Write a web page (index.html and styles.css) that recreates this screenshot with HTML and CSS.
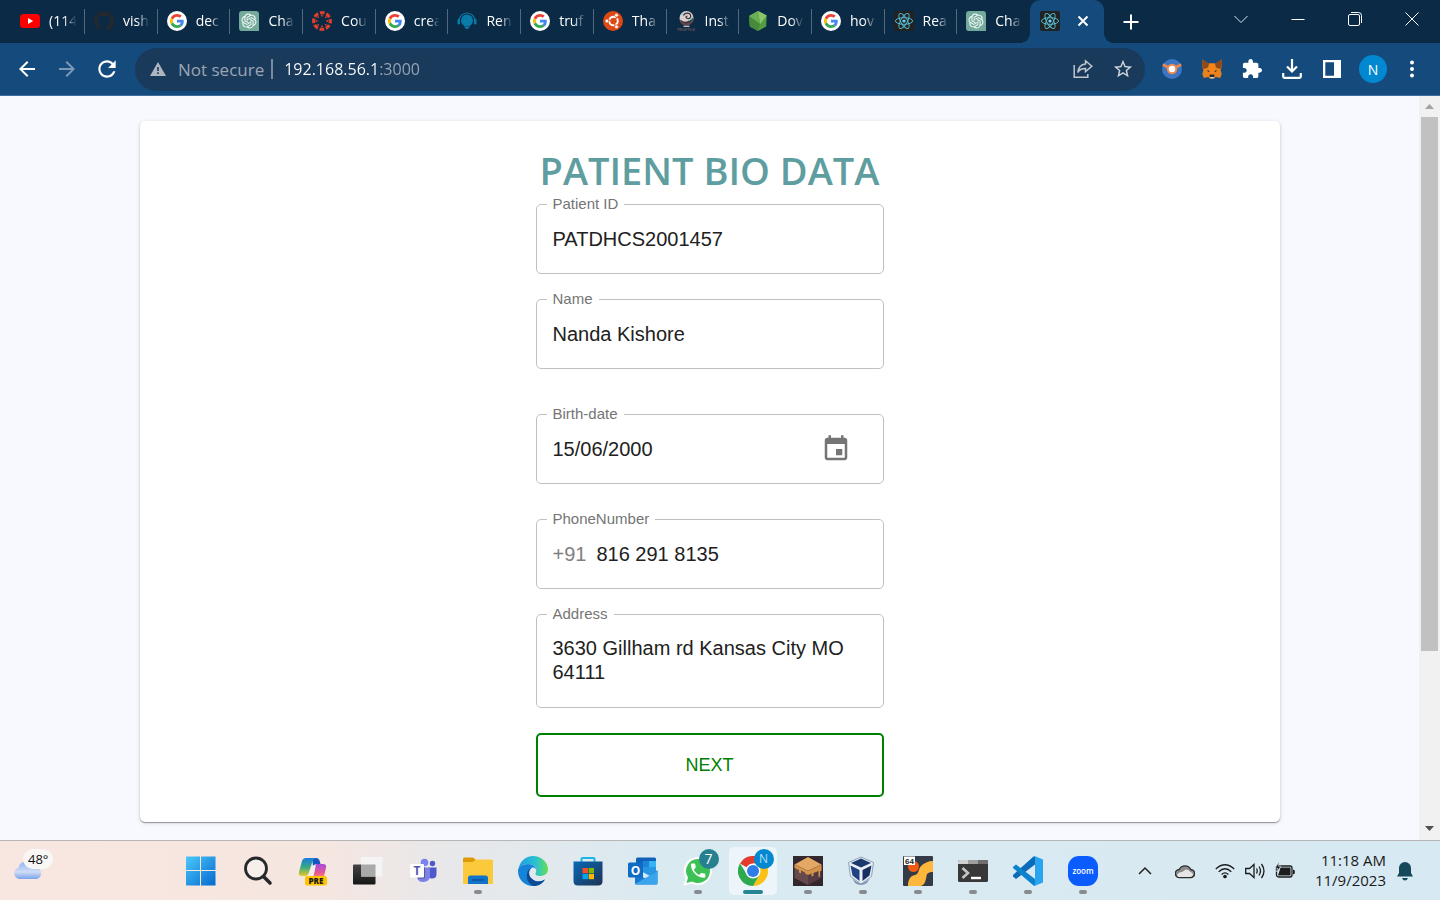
FILE: index.html
```html
<!DOCTYPE html>
<html lang="en">
<head>
<meta charset="utf-8">
<title>Patient Bio Data</title>
<link rel="stylesheet" href="styles.css">
</head>
<body>
<svg class="defs" aria-hidden="true">
  <symbol id="google" viewBox="0 0 80 80">
    <circle cx="40" cy="40" r="40" fill="#fff"/>
    <g transform="translate(12 12) scale(1.17)">
      <path fill="#ea4335" d="M24 9.5c3.54 0 6.71 1.22 9.21 3.6l6.85-6.85C35.9 2.38 30.47 0 24 0 14.62 0 6.51 5.38 2.56 13.22l7.98 6.19C12.43 13.72 17.74 9.5 24 9.5z"/>
      <path fill="#4285f4" d="M46.98 24.55c0-1.57-.15-3.09-.38-4.55H24v9.02h12.94c-.58 2.96-2.26 5.48-4.78 7.18l7.73 6c4.51-4.18 7.09-10.36 7.09-17.65z"/>
      <path fill="#fbbc05" d="M10.53 28.59c-.48-1.45-.76-2.99-.76-4.59s.27-3.14.76-4.59l-7.98-6.19C.92 16.46 0 20.12 0 24c0 3.88.92 7.54 2.56 10.78l7.97-6.19z"/>
      <path fill="#34a853" d="M24 48c6.48 0 11.93-2.13 15.89-5.81l-7.73-6c-2.15 1.45-4.92 2.3-8.16 2.3-6.26 0-11.57-4.22-13.47-9.91l-7.98 6.19C6.51 42.62 14.62 48 24 48z"/>
    </g>
  </symbol>
  <symbol id="chatgpt" viewBox="0 0 32 32">
    <path fill="#74aa9c" d="M5 0h22a5 5 0 0 1 5 5v27H5a5 5 0 0 1-5-5V5a5 5 0 0 1 5-5z"/>
    <path transform="translate(4 4)" fill="#fff" d="M22.2819 9.8211a5.9847 5.9847 0 0 0-.5157-4.9108 6.0462 6.0462 0 0 0-6.5098-2.9A6.0651 6.0651 0 0 0 4.9807 4.1818a5.9847 5.9847 0 0 0-3.9977 2.9 6.0462 6.0462 0 0 0 .7427 7.0966 5.98 5.98 0 0 0 .511 4.9107 6.051 6.051 0 0 0 6.5146 2.9001A5.9847 5.9847 0 0 0 13.2599 24a6.0557 6.0557 0 0 0 5.7718-4.2058 5.9894 5.9894 0 0 0 3.9977-2.9001 6.0557 6.0557 0 0 0-.7475-7.0729zm-9.022 12.6081a4.4755 4.4755 0 0 1-2.8764-1.0408l.1419-.0804 4.7783-2.7582a.7948.7948 0 0 0 .3927-.6813v-6.7369l2.02 1.1686a.071.071 0 0 1 .038.052v5.5826a4.504 4.504 0 0 1-4.4945 4.4944zm-9.6607-4.1254a4.4708 4.4708 0 0 1-.5346-3.0137l.142.0852 4.783 2.7582a.7712.7712 0 0 0 .7806 0l5.8428-3.3685v2.3324a.0804.0804 0 0 1-.0332.0615L9.74 19.9502a4.4992 4.4992 0 0 1-6.1408-1.6464zM2.3408 7.8956a4.485 4.485 0 0 1 2.3655-1.9728V11.6a.7664.7664 0 0 0 .3879.6765l5.8144 3.3543-2.0201 1.1685a.0757.0757 0 0 1-.071 0l-4.8303-2.7865A4.504 4.504 0 0 1 2.3408 7.872zm16.5963 3.8558L13.1038 8.364 15.1192 7.2a.0757.0757 0 0 1 .071 0l4.8303 2.7913a4.4944 4.4944 0 0 1-.6765 8.1042v-5.6772a.79.79 0 0 0-.407-.667zm2.0107-3.0231l-.142-.0852-4.7735-2.7818a.7759.7759 0 0 0-.7854 0L9.409 9.2297V6.8974a.0662.0662 0 0 1 .0284-.0615l4.8303-2.7866a4.4992 4.4992 0 0 1 6.6802 4.66zM8.3065 12.863l-2.02-1.1638a.0804.0804 0 0 1-.038-.0567V6.0742a4.4992 4.4992 0 0 1 7.3757-3.4537l-.142.0805L8.704 5.459a.7948.7948 0 0 0-.3927.6813zm1.0976-2.3654l2.602-1.4998 2.6069 1.4998v2.9994l-2.5974 1.4997-2.6067-1.4997Z"/>
  </symbol>
  <symbol id="react" viewBox="0 0 20 20">
    <rect width="20" height="20" rx="2" fill="#222"/>
    <circle cx="10" cy="10" r="1.6" fill="#61dafb"/>
    <g fill="none" stroke="#58c4dc" stroke-width=".9">
      <ellipse cx="10" cy="10" rx="8.6" ry="3.3"/>
      <ellipse cx="10" cy="10" rx="8.6" ry="3.3" transform="rotate(60 10 10)"/>
      <ellipse cx="10" cy="10" rx="8.6" ry="3.3" transform="rotate(120 10 10)"/>
    </g>
  </symbol>
</svg>

<header class="browser">
  <div class="tabstrip">
    <div class="tabs" role="tablist">
      <button class="tab" role="tab"><svg class="fav" viewBox="0 0 20 20"><rect y="3" width="20" height="14" rx="3.5" fill="#f00"/><path d="M8 7l5.200 3L8 13z" fill="#fff"/></svg><span class="tab-title">(114</span></button>
      <button class="tab" role="tab"><svg class="fav" viewBox="0 0 24 24"><path fill="#24292f" d="M12 .297c-6.63 0-12 5.373-12 12 0 5.303 3.438 9.8 8.205 11.385.6.113.82-.258.82-.577 0-.285-.01-1.04-.015-2.04-3.338.724-4.042-1.61-4.042-1.61C4.422 18.07 3.633 17.7 3.633 17.7c-1.087-.744.084-.729.084-.729 1.205.084 1.838 1.236 1.838 1.236 1.07 1.835 2.809 1.305 3.495.998.108-.776.417-1.305.76-1.605-2.665-.3-5.466-1.332-5.466-5.93 0-1.31.465-2.38 1.235-3.22-.135-.303-.54-1.523.105-3.176 0 0 1.005-.322 3.3 1.23.96-.267 1.98-.399 3-.405 1.02.006 2.04.138 3 .405 2.28-1.552 3.285-1.23 3.285-1.23.645 1.653.24 2.873.12 3.176.765.84 1.23 1.91 1.23 3.22 0 4.61-2.805 5.625-5.475 5.92.42.36.81 1.096.81 2.22 0 1.606-.015 2.896-.015 3.286 0 .315.21.69.825.57C20.565 22.092 24 17.592 24 12.297c0-6.627-5.373-12-12-12"/></svg><span class="tab-title">vish</span></button>
      <button class="tab" role="tab"><svg class="fav"><use href="#google"/></svg><span class="tab-title">dec</span></button>
      <button class="tab" role="tab"><svg class="fav"><use href="#chatgpt"/></svg><span class="tab-title">Cha</span></button>
      <button class="tab" role="tab"><svg class="fav" viewBox="0 0 20 20"><circle cx="10" cy="10" r="8.300" fill="none" stroke="#e13f2b" stroke-width="3.200" stroke-dasharray="4.700 1.818" stroke-dashoffset="2.350"/><g fill="#e13f2b"><circle cx="10" cy="4.700" r=".9"/><circle cx="10" cy="15.300" r=".9"/><circle cx="4.700" cy="10" r=".9"/><circle cx="15.300" cy="10" r=".9"/><circle cx="6.200" cy="6.200" r=".9"/><circle cx="13.800" cy="6.200" r=".9"/><circle cx="6.200" cy="13.800" r=".9"/><circle cx="13.800" cy="13.800" r=".9"/></g></svg><span class="tab-title">Cou</span></button>
      <button class="tab" role="tab"><svg class="fav"><use href="#google"/></svg><span class="tab-title">crea</span></button>
      <button class="tab" role="tab"><svg class="fav" viewBox="0 0 20 20"><path d="M2 10a8 8 0 0 1 16 0" fill="none" stroke="#0a7ba8" stroke-width="1.200"/><circle cx="10" cy="9.500" r="6" fill="#0a7ba8"/><path d="M6.500 15.500h7L10 18.500z" fill="#0a7ba8"/><rect x=".5" y="8" width="2.500" height="5.500" rx="1.200" fill="#0a7ba8"/><rect x="17" y="8" width="2.500" height="5.500" rx="1.200" fill="#0a7ba8"/></svg><span class="tab-title">Ren</span></button>
      <button class="tab" role="tab"><svg class="fav"><use href="#google"/></svg><span class="tab-title">truf</span></button>
      <button class="tab" role="tab"><svg class="fav" viewBox="0 0 20 20"><circle cx="10" cy="10" r="10" fill="#dd4814"/><circle cx="10.500" cy="10" r="4.300" fill="none" stroke="#fff" stroke-width="1.900" stroke-dasharray="7.900 1.100" stroke-dashoffset="3.400"/><g fill="#fff" stroke="#dd4814" stroke-width=".7"><circle cx="3.900" cy="10" r="1.900"/><circle cx="13.500" cy="4.200" r="1.900"/><circle cx="13.500" cy="15.800" r="1.900"/></g></svg><span class="tab-title">Tha</span></button>
      <button class="tab" role="tab"><svg class="fav" viewBox="0 0 20 20"><circle cx="10.500" cy="7" r="7" fill="#d8d0cf"/><path d="M3.500 7.500c1.500 3 4 4 7 3.500s5-2.500 6.500-4.500c1 4-2 8-6.500 8s-7-3-7-7z" fill="#5e464d"/><path d="M7.500 4.500c1-3 6-3 7-.5s-1 4-3 3.500-2-2.500 0-2.500M5 9.500c2 2.500 7 2.500 10 0" fill="none" stroke="#3a2a2f" stroke-width="1.200"/><path d="M12 9.500c2 0 3.500-1.500 4-3M5.500 4l1.500-2" stroke="#3fe0c5" fill="none"/><rect x="7.500" y="14.700" width="6" height="1.200" fill="#d8d0cf"/><text x="10" y="19.800" text-anchor="middle" font-size="4" fill="#63525a" font-family="Liberation Sans" font-weight="700">TRUFFLE</text></svg><span class="tab-title">Inst</span></button>
      <button class="tab" role="tab"><svg class="fav" viewBox="0 0 20 20"><path d="M10 0l8.700 4.500-.5 11L10 20l-8.200-4.500L1 5z" fill="#539e43"/><path d="M10 0l8.700 4.500L12 13z" fill="#8cc56b"/><path d="M10 0l2 13L1 5z" fill="#69ad55"/><path d="M1 5l11 8-2 7-8.200-4.500z" fill="#48893c"/></svg><span class="tab-title">Dov</span></button>
      <button class="tab" role="tab"><svg class="fav"><use href="#google"/></svg><span class="tab-title">hov</span></button>
      <button class="tab" role="tab"><svg class="fav"><use href="#react"/></svg><span class="tab-title">Rea</span></button>
      <button class="tab" role="tab"><svg class="fav"><use href="#chatgpt"/></svg><span class="tab-title">Cha</span></button>
    </div>
    <div class="active-tab">
      <svg class="fav"><use href="#react"/></svg>
      <button class="icon-btn" aria-label="Close tab"><svg width="12" height="12" viewBox="0 0 12 12"><path d="M1.500 1.500l9 9M10.500 1.500l-9 9" stroke="#fff" stroke-width="2"/></svg></button>
    </div>
    <button class="icon-btn new-tab" aria-label="New tab"><svg width="16" height="16" viewBox="0 0 16 16"><path d="M8 .5v15M.5 8h15" stroke="#fff" stroke-width="2"/></svg></button>
    <div class="window-controls">
      <button class="icon-btn" aria-label="Search tabs"><svg width="14" height="14" viewBox="0 0 14 14"><path d="M.5 4L7 10.500 13.500 4" fill="none" stroke="#dfe6ee"/></svg></button>
      <button class="icon-btn" aria-label="Minimize"><svg width="14" height="14" viewBox="0 0 14 14"><path d="M.5 7.500h13" stroke="#fff"/></svg></button>
      <button class="icon-btn" aria-label="Restore"><svg width="14" height="14" viewBox="0 0 14 14" fill="none" stroke="#fff"><rect x=".5" y="2.500" width="11" height="11" rx="1.500"/><path d="M3 .5h7.500a3 3 0 0 1 3 3V11"/></svg></button>
      <button class="icon-btn" aria-label="Close"><svg width="14" height="14" viewBox="0 0 14 14"><path d="M.5.5l13 13M13.500.5l-13 13" stroke="#fff"/></svg></button>
    </div>
  </div>

  <div class="toolbar">
    <div class="nav">
      <button class="icon-btn" aria-label="Back"><svg width="24" height="24" viewBox="0 0 24 24" fill="#fff"><path d="M20 11H7.830l5.590-5.590L12 4l-8 8 8 8 1.410-1.410L7.830 13H20v-2z"/></svg></button>
      <button class="icon-btn" aria-label="Forward"><svg width="24" height="24" viewBox="0 0 24 24" fill="#7b98b6"><path d="M4 11h12.170l-5.590-5.590L12 4l8 8-8 8-1.410-1.410L16.170 13H4v-2z"/></svg></button>
      <button class="icon-btn" aria-label="Reload"><svg width="26" height="26" viewBox="0 0 24 24" fill="#fff"><path d="M17.650 6.350C16.200 4.900 14.210 4 12 4c-4.420 0-7.990 3.580-7.990 8s3.570 8 7.990 8c3.730 0 6.840-2.550 7.730-6h-2.080c-.82 2.330-3.040 4-5.650 4-3.310 0-6-2.690-6-6s2.690-6 6-6c1.660 0 3.140.69 4.220 1.780L13 11h7V4l-2.350 2.350z"/></svg></button>
    </div>
    <div class="omnibox">
      <svg width="16" height="14" viewBox="0 0 16 14"><path d="M8 0l8 14H0z" fill="#aeb6c0"/><path d="M7.200 5h1.600v4H7.200zM7.200 10.300h1.600v1.700H7.200z" fill="#1a3a5c"/></svg>
      <span class="security">Not secure</span>
      <span class="divider"></span>
      <input class="url" type="text" aria-label="Address bar" value="192.168.56.1:3000">
      <button class="icon-btn share" aria-label="Share"><svg width="20" height="20" viewBox="0 0 20 20" fill="none" stroke="#bfc5cc" stroke-width="1.500"><path d="M1.200 6v12.200h13.600V15"/><path d="M12.500 1.800l6.300 5.400-6.300 5.400V9.500C9 9.300 6.500 10.500 4.800 13.500 5.300 8.500 8 5.300 12.500 4.900z"/></svg></button>
      <button class="icon-btn" aria-label="Bookmark"><svg width="22" height="22" viewBox="0 0 24 24" fill="#cfd3d8"><path d="M22 9.240l-7.190-.62L12 2 9.190 8.630 2 9.240l5.460 4.730L5.820 21 12 17.270 18.180 21l-1.630-7.030L22 9.240zM12 15.400l-3.760 2.270 1-4.280-3.320-2.880 4.380-.38L12 6.100l1.710 4.040 4.380.38-3.320 2.880 1 4.280L12 15.400z"/></svg></button>
    </div>
    <div class="extensions">
      <button class="icon-btn" aria-label="Extension"><svg width="20" height="20" viewBox="0 0 20 20"><circle cx="10" cy="10" r="10" fill="#3a76c4"/><path d="M.8 5.500L5.500 8M19.200 5.500L14.500 8" stroke="#f0874a" stroke-width="2.600"/><circle cx="10" cy="10" r="4.300" fill="#fff" stroke="#f0874a" stroke-width="2"/></svg></button>
      <button class="icon-btn" aria-label="MetaMask"><svg width="20" height="20" viewBox="0 0 20 20"><path d="M0 .5L6.500 4.500h7L20 .5l-.3 7-1 4 1 3.500-1.500 4-4.500-1-1.500 1.500H7.800L6.300 18l-4.500 1L.3 15l1-3.500-1-4z" fill="#e8821e"/><path d="M0 .5l7 4-1 4L1.500 10 .3 7.500zM20 .5l-7 4 1 4 4.500 1.500 1.200-2.500z" fill="#8d4a1b"/><path d="M7.500 4.500h5l.8 7.500-1.300 4H8l-1.300-4z" fill="#f6851b"/><path d="M4.500 11.500l3 .3-.3 1.500zM15.500 11.500l-3 .3.3 1.500z" fill="#233447"/><path d="M7.800 15.500h4.400l.3 2-1 .8h-3l-1-.8z" fill="#222b35"/><path d="M8 18h4l-.5 1.500h-3z" fill="#d9cfc4"/></svg></button>
      <button class="icon-btn" aria-label="Extensions"><svg width="20" height="20" viewBox="1 1 22 22" fill="#fff"><path d="M20.500 11H19V7c0-1.100-.9-2-2-2h-4V3.500C13 2.120 11.880 1 10.500 1S8 2.120 8 3.500V5H4c-1.100 0-1.990.9-1.990 2v3.800H3.500c1.490 0 2.700 1.210 2.700 2.700s-1.210 2.700-2.700 2.700H2V20c0 1.100.9 2 2 2h3.800v-1.500c0-1.490 1.210-2.700 2.700-2.700 1.490 0 2.700 1.210 2.700 2.700V22H17c1.100 0 2-.9 2-2v-4h1.500c1.380 0 2.500-1.120 2.500-2.500S21.880 11 20.500 11z"/></svg></button>
      <button class="icon-btn" aria-label="Downloads"><svg width="20" height="20" viewBox="0 0 20 20" fill="none" stroke="#fff" stroke-width="2.200"><path d="M10 0v12M5 7.500l5 5 5-5M1.200 14v3.500q0 1.300 1.300 1.300h15q1.300 0 1.300-1.300V14"/></svg></button>
      <button class="icon-btn" aria-label="Side panel"><svg width="20" height="20" viewBox="0 0 20 20"><path fill="#fff" fill-rule="evenodd" d="M1 1h18v18H1zM3.300 3.300v13.400H12V3.300z"/></svg></button>
      <button class="avatar" aria-label="Profile">N</button>
      <button class="icon-btn" aria-label="Menu"><svg width="20" height="20" viewBox="0 0 20 20" fill="#fff"><circle cx="10" cy="3.500" r="2"/><circle cx="10" cy="10" r="2"/><circle cx="10" cy="16.500" r="2"/></svg></button>
    </div>
  </div>
</header>

<div class="viewport">
  <main class="page">
    <form class="card">
      <h1>PATIENT BIO DATA</h1>
      <fieldset class="field">
        <legend><label for="pid">Patient ID</label></legend>
        <input id="pid" class="control" type="text" value="PATDHCS2001457">
      </fieldset>
      <fieldset class="field gap-s">
        <legend><label for="name">Name</label></legend>
        <input id="name" class="control" type="text" value="Nanda Kishore">
      </fieldset>
      <fieldset class="field gap-l">
        <legend><label for="dob">Birth-date</label></legend>
        <div class="row">
          <input id="dob" class="control" type="text" value="15/06/2000">
          <button type="button" class="icon-btn calendar" aria-label="Choose date"><svg width="30" height="30" viewBox="0 0 24 24" fill="#757575"><path d="M17 12h-5v5h5v-5zM16 1v2H8V1H6v2H5c-1.110 0-1.990.9-1.990 2L3 19c0 1.100.89 2 2 2h14c1.100 0 2-.9 2-2V5c0-1.100-.9-2-2-2h-1V1h-2zm3 18H5V8h14v11z"/></svg></button>
        </div>
      </fieldset>
      <fieldset class="field gap-m">
        <legend><label for="phone">PhoneNumber</label></legend>
        <div class="row">
          <span class="prefix">+91</span>
          <input id="phone" class="control" type="text" value="816 291 8135">
        </div>
      </fieldset>
      <fieldset class="field gap-s">
        <legend><label for="address">Address</label></legend>
        <textarea id="address" class="control">3630 Gillham rd Kansas City MO 64111</textarea>
      </fieldset>
      <button type="button" class="next">NEXT</button>
    </form>
  </main>
  <div class="scrollbar">
    <svg width="21" height="21" viewBox="0 0 21 21"><path d="M6 13l4.500-5 4.500 5z" fill="#a3a3a3"/></svg>
    <div class="track"><div class="thumb"></div></div>
    <svg width="21" height="21" viewBox="0 0 21 21"><path d="M6 7l4.500 5L15 7z" fill="#505050"/></svg>
  </div>
</div>

<footer class="taskbar">
  <button class="weather" aria-label="Weather">
    <svg width="30" height="26" viewBox="0 0 30 26"><defs><linearGradient id="cl" x1="0" y1="0" x2="0" y2="1"><stop offset="0" stop-color="#8fb3f5"/><stop offset=".6" stop-color="#cfdcf3"/><stop offset="1" stop-color="#7ba2ee"/></linearGradient></defs><path d="M6 25a6 6 0 0 1-.5-11.500A8 8 0 0 1 20 11a5 5 0 0 1 3.500 2.500A6 6 0 0 1 24 25z" fill="url(#cl)"/></svg>
    <span class="temp">48°</span>
  </button>
  <nav class="apps" aria-label="Apps">
    <button class="app" aria-label="Start"><svg viewBox="0 0 30 30"><defs><linearGradient id="wn" x1="0" y1="0" x2="1" y2="1"><stop offset="0" stop-color="#4cc9fa"/><stop offset="1" stop-color="#0468cf"/></linearGradient></defs><path fill="url(#wn)" d="M0 .5h14V14H0zM15 .5h14.500V14H15zM0 15h14v14.500H0zM15 15h14.500v14.500H15z"/></svg></button>
    <button class="app" aria-label="Search"><svg viewBox="0 0 30 30"><circle cx="13" cy="12.500" r="10.500" fill="#f6efec" stroke="#26292b" stroke-width="2.800"/><path d="M20.500 20.500l6.500 6.500" stroke="#26292b" stroke-width="3.600" stroke-linecap="round"/></svg></button>
    <button class="app" aria-label="Copilot"><svg viewBox="0 0 30 30"><defs><linearGradient id="cp1" x1="0" y1="0" x2="0" y2="1"><stop offset="0" stop-color="#1a7be0"/><stop offset=".5" stop-color="#35a884"/><stop offset="1" stop-color="#e6c928"/></linearGradient><linearGradient id="cp2" x1="0" y1="0" x2="0" y2="1"><stop offset="0" stop-color="#a54be0"/><stop offset=".6" stop-color="#e9588f"/><stop offset="1" stop-color="#ff9a5a"/></linearGradient></defs><path d="M14 2h4q3 0 4 4l1 4h-8z" fill="#1555c0"/><path d="M8 2h10q-3 1-4 5l-3 9q-1 4-4 4H4q-4 0-3-4L4 5q1-3 4-3z" fill="url(#cp1)"/><path d="M18 8h7q4 0 3 4l-2 8q-1 3-4 3h-9q2-1 3-5z" fill="url(#cp2)"/><path d="M14 10l4-2-3 12h-4z" fill="#f2eef0"/><rect x="7" y="20" width="22" height="9.500" rx="2" fill="#ffc400"/><text x="18" y="27.500" text-anchor="middle" font-family="Open Sans" font-weight="800" font-size="8" fill="#1b1b1b">PRE</text></svg></button>
    <button class="app" aria-label="Task view"><svg viewBox="0 0 30 30"><defs><linearGradient id="tv" x1="0" y1="0" x2="0" y2="1"><stop offset="0" stop-color="#444"/><stop offset="1" stop-color="#161616"/></linearGradient></defs><rect x="0" y="8.500" width="22.500" height="20" rx="1" fill="url(#tv)"/><rect x="8" y="1" width="21.500" height="19.500" rx="1" fill="#f4f4f4"/><path d="M8 8.500h14.500v12H8z" fill="#a9a9a9"/></svg></button>
    <button class="app" aria-label="Teams"><svg viewBox="0 0 30 30"><circle cx="16.500" cy="6.500" r="3.800" fill="#7b83eb"/><circle cx="24.500" cy="7.500" r="2.700" fill="#5059c9"/><path d="M20 11.500h8.500v6.500q0 4.500-4.500 4.500t-4.500-3z" fill="#5059c9"/><path d="M9 11.500h13v8q0 6.500-6.500 6.500T9 20z" fill="#7b83eb"/><path d="M12 11.500h5v10q0 1-1 1h-6z" fill="#5a5a92"/><rect x="2" y="8" width="14" height="13.500" rx="1" fill="#fff"/><text x="9" y="19" text-anchor="middle" font-family="Open Sans" font-weight="700" font-size="12" fill="#5558af">T</text></svg></button>
    <button class="app running" aria-label="File Explorer"><svg viewBox="0 0 30 30"><path d="M0 3q0-1.500 1.500-1.500H10l3 2.500-3 3H0z" fill="#dd9a08"/><path d="M0 6h9.500L13 3.500h15.500Q30 3.500 30 5v22q0 1-1 1H1q-1 0-1-1z" fill="#fcc93c"/><path d="M5 28v-6q0-2.500 2.500-2.500h15q2.500 0 2.500 2.500v6z" fill="#1273ca"/><path d="M9 24h12" stroke="#0b4f92" stroke-width="1.400"/></svg></button>
    <button class="app" aria-label="Edge"><svg viewBox="0 0 30 30"><defs><linearGradient id="e1" x1="0" x2="1"><stop offset="0" stop-color="#1b9de2"/><stop offset=".6" stop-color="#2cc3cf"/><stop offset="1" stop-color="#66e04e"/></linearGradient></defs><path d="M.5 13C2 5 8 0 15 0c9 0 15 7 15 13 0 5-4 7-8 7-3 0-5-1-4.500-2.500C20 13 17 8 10 8 5 8 2 10 .5 13z" fill="url(#e1)"/><path d="M0 15c0-4 4-7 10-7 5 0 8 3 8.500 6-1-2-3-3-5-2-3 2-3.500 7 0 10.500 4 4 9 3.500 13.500 1C24 28 20 30 15 30 6 30 0 23 0 15z" fill="#1583d8"/><path d="M13.500 12c-6 2-7 14 2 18C20 30 24 28 27 23.500c-4.500 2.500-9.500 3-13.500-1C10 19 10.500 14 13.500 12z" fill="#0c4a92"/></svg></button>
    <button class="app" aria-label="Microsoft Store"><svg viewBox="0 0 30 30"><defs><linearGradient id="st" x1="0" y1="0" x2="1" y2="1"><stop offset="0" stop-color="#0669b8"/><stop offset="1" stop-color="#203353"/></linearGradient></defs><path d="M8.500 7V3q0-1 1-1h11q1 0 1 1v4" fill="none" stroke="#1bb5ea" stroke-width="2"/><path d="M.5 5.500h29V25q0 4.500-4.500 4.500H5Q.5 29.500.5 25z" fill="url(#st)"/><path d="M9.500 12H15v5.300H9.500z" fill="#f25022"/><path d="M15.700 12h5.300v5.300h-5.300z" fill="#7fba00"/><path d="M9.500 18H15v5.200H9.500z" fill="#00a4ef"/><path d="M15.700 18h5.300v5.200h-5.300z" fill="#ffb900"/></svg></button>
    <button class="app" aria-label="Outlook"><svg viewBox="0 0 30 30"><path d="M8 3q0-1.500 1.500-1.500h17Q28 1.500 28 3v13H8z" fill="#0f62b8"/><path d="M14.500 5h6.500v6h-6.500z" fill="#1b84d6"/><path d="M21 5h7v6h-7z" fill="#35b3f2"/><path d="M14.500 11H28v6l-6 3-7.500-4z" fill="#2897e3"/><path d="M7 16l11 7 11.500-9v13q0 1.500-1.500 1.500H8.500Q7 28.500 7 27z" fill="#1a78d2"/><path d="M7 28l22.500-13v12q0 1.500-1.500 1.500H8z" fill="#3aa5ec"/><rect y="6.500" width="15" height="15" rx="1.500" fill="#0f6cc4"/><text x="7.500" y="18.500" text-anchor="middle" font-family="Open Sans" font-weight="700" font-size="12" fill="#fff">O</text></svg></button>
    <button class="app running" aria-label="WhatsApp"><svg viewBox="0 0 30 30"><path d="M15 1a14 14 0 1 1-6.500 26.500L.5 29.500 2.600 22A14 14 0 0 1 15 1z" fill="#fff"/><path d="M15 3a12 12 0 1 1-6 22.400L3.500 27 5 21.500A12 12 0 0 1 15 3z" fill="#3cc254"/><path transform="translate(5.500 5) scale(.8)" fill="#fff" d="M6.620 10.790c1.440 2.830 3.760 5.140 6.590 6.590l2.200-2.200c.27-.27.67-.36 1.020-.24 1.120.37 2.330.57 3.570.57.55 0 1 .45 1 1V20c0 .55-.45 1-1 1-9.390 0-17-7.610-17-17 0-.55.45-1 1-1h3.500c.55 0 1 .45 1 1 0 1.250.2 2.450.57 3.570.11.35.03.74-.25 1.020l-2.200 2.200z"/></svg><span class="badge badge-count">7</span></button>
    <button class="app running active" aria-label="Chrome"><svg viewBox="0 0 30 30"><path d="M15 15L2 7.500A15 15 0 0 1 28 7.500H15z" fill="#e33b2e"/><path d="M28 7.500A15 15 0 0 1 15 30l6.500-11.200L15 7.500z" fill="#fbc116"/><path d="M2 7.500A15 15 0 0 0 15 30l6.500-11.200H9z" fill="#2da94f"/><circle cx="15" cy="15" r="7.500" fill="#fff"/><circle cx="15" cy="15" r="6" fill="#2f7de9"/></svg><span class="badge badge-user">N</span></button>
    <button class="app running" aria-label="Minecraft mod"><svg viewBox="0 0 30 30"><rect width="30" height="30" fill="#33262c"/><path d="M15 1l13.500 7.500L15 15 1.500 8.500z" fill="#e3a866"/><path d="M1.500 8.500L15 15v14L1.500 22z" fill="#674a4e"/><path d="M28.500 8.500L15 15v14l13.500-7z" fill="#543b42"/><path d="M1.500 8.500L15 15l13.500-6.500v6l-1.500 1v5l-1.500.5v-6l-5 2v3l-2 .5v-3L15 19l-3-1.500v-1L8 14.500v3l-2-1v-2.500l-4.500-2z" fill="#d39149"/></svg></button>
    <button class="app running" aria-label="VirtualBox"><svg viewBox="0 0 30 30"><path d="M4 22q9 10 18 0l-3 5q-6 4-12 0z" fill="#7e93ad"/><path d="M13 1l12.500 5.500-2 14L13 28 2.500 20.500.5 6.500z" fill="#e9eff5" stroke="#8fa1b8"/><path d="M13 2.500L23 7l-10 4.500L3 7z" fill="#1a3a6e"/><path d="M2.500 9.500l9 4.500v11l-7-5.500z" fill="#1f4380"/><path d="M23.500 9.500l-9 4.500v11l7-5.500z" fill="#16315f"/></svg></button>
    <button class="app running" aria-label="PuTTY"><svg viewBox="0 0 30 30"><rect width="30" height="30" rx="1" fill="#343a46"/><path d="M30 5v11c-4 0-6 1-6.500 4S22 30 17 30H5c0-6 2-10 7-11 4-1 3-5 6-9 3-3 7-5 12-5z" fill="#fdb73c"/><circle cx="10.500" cy="10.500" r="5.500" fill="#f15a12"/><rect x="1" y=".5" width="11" height="8.500" fill="#fff"/><text x="6.500" y="7.500" text-anchor="middle" font-family="Liberation Sans" font-weight="700" font-size="8" fill="#222">64</text></svg></button>
    <button class="app running" aria-label="Terminal"><svg viewBox="0 0 30 30"><rect y="4" width="30" height="22" rx="1.500" fill="#383838"/><path d="M0 8V5.500Q0 4 1.500 4H10v4z" fill="#d0d0d0"/><path d="M10 4h10v4H10z" fill="#9e9e9e"/><path d="M20 4h8.500Q30 4 30 5.500V8H20z" fill="#6f6f6f"/><path d="M4.500 12l5.500 5-5.500 5" fill="none" stroke="#c4c4c4" stroke-width="2.600"/><path d="M13 22h10" stroke="#fff" stroke-width="2.400"/></svg></button>
    <button class="app running" aria-label="Visual Studio Code"><svg viewBox="0 0 30 30"><path d="M22 8.500L3 23 0 20.500 0 19 20.500.5 22 1z" fill="#0a6cb8"/><path d="M0 11l3-2.500 19 14.500v6.500l-1.500 0L0 12z" fill="#0c82cf"/><path d="M21.500 0L30 3.500v23L21.500 30q-1 0-1.500-.7 2 .7 2-1.500V2q0-1.500-2-1.300z" fill="#2aa4f0"/></svg></button>
    <button class="app running" aria-label="Zoom"><svg viewBox="0 0 30 30"><rect width="30" height="30" rx="11" fill="#0b5cff"/><text x="15" y="17.500" text-anchor="middle" font-family="Open Sans" font-weight="600" font-size="8" fill="#fff">zoom</text></svg></button>
  </nav>
  <div class="tray">
    <button class="icon-btn" aria-label="Hidden icons"><svg width="14" height="14" viewBox="0 0 14 14"><path d="M1 10l6-6 6 6" fill="none" stroke="#222" stroke-width="1.500"/></svg></button>
    <button class="icon-btn" aria-label="OneDrive"><svg width="20" height="20" viewBox="0 0 20 20"><path d="M4.500 16.500a4 4 0 0 1-.3-8 6.500 6.500 0 0 1 11.600 0 4 4 0 0 1-.3 8z" fill="#8b8b8b" stroke="#2c2c2c" stroke-width="1.300"/><path d="M2 14.500Q3 11 7 11l4-2.500q3 0 4.500 2.500 2.500.5 2.500 3-1 2-3 2H4.500Q2.500 16 2 14.500z" fill="#e6e6e6"/></svg></button>
    <div class="status">
      <svg width="20" height="20" viewBox="0 0 20 20" fill="none" stroke="#1c1c1c" stroke-width="1.300"><path d="M.8 8q9.200-8.500 18.400 0M3.700 10.800q6.300-6 12.600 0M6.600 13.500q3.400-3.300 6.800 0"/><circle cx="10" cy="15.500" r="1.200" fill="#1c1c1c"/></svg>
      <svg width="20" height="20" viewBox="0 0 20 20" fill="none" stroke="#1c1c1c" stroke-width="1.300"><path d="M.7 7.500h3.800L9 3.500v13L4.500 12.500H.7zM11.500 7.500q1.500 2.500 0 5M14 5.500q3 4.500 0 9M16.500 3q5 7 0 14"/></svg>
      <svg width="20" height="20" viewBox="0 0 20 20"><rect x="1.500" y="5" width="15.500" height="11" rx="2" fill="none" stroke="#1c1c1c" stroke-width="1.300"/><path d="M5.500 6.500h10v8H3z" fill="#1c1c1c"/><path d="M18 8.500l1.800 1v3L18 13.500z" fill="#1c1c1c"/><path d="M4 1L0 7.200h2.500L1.500 11 6 5.200H3.500z" fill="#1c1c1c" stroke="#d9e9f2" stroke-width=".6"/></svg>
    </div>
    <div class="clock"><time>11:18 AM</time><time>11/9/2023</time></div>
    <button class="icon-btn" aria-label="Notifications"><svg width="18" height="20" viewBox="0 0 18 20" fill="#15495a"><path d="M9 1a6 6 0 0 1 6 6v5l2 3.500H1L3 12V7a6 6 0 0 1 6-6zM6 17h6q-1 2.500-3 2.500T6 17z"/></svg></button>
  </div>
</footer>
</body>
</html>
```
FILE: styles.css
```css
* { box-sizing: border-box; }

body {
  margin: 0;
  height: 100vh;
  display: flex;
  flex-direction: column;
  overflow: hidden;
  font-family: "Open Sans", "Noto Sans", sans-serif;
  background: #f8f8ff;
}

button {
  font: inherit;
  border: 0;
  padding: 0;
  background: none;
  color: inherit;
}

svg { display: block; flex: none; }
.defs { position: absolute; width: 0; height: 0; }

.icon-btn {
  display: flex;
  align-items: center;
  justify-content: center;
}

/* Tab strip */
.tabstrip {
  display: flex;
  height: 43px;
  padding-left: 14px;
  background: #0a2a45;
  color: #fff;
}
.tabs {
  flex: 0 1 1016px;
  min-width: 0;
  display: grid;
  grid-template-columns: 71px repeat(13, minmax(0, 1fr));
}
.tab {
  display: flex;
  align-items: center;
  gap: 9px;
  height: 25px;
  margin-top: 9px;
  padding: 0 6px 2px 9px;
  border-right: 1px solid #52687d;
  font-size: 14px;
  line-height: 22px;
  text-align: left;
}
.tab:first-child { padding-left: 6px; }
.tab:last-child { border-right-color: transparent; }
.tab-title {
  flex: 1;
  min-width: 0;
  overflow: hidden;
  white-space: nowrap;
  -webkit-mask-image: linear-gradient(90deg, #000 50%, transparent 95%);
  mask-image: linear-gradient(90deg, #000 50%, transparent 95%);
}
.fav { width: 20px; height: 20px; }
.active-tab {
  position: relative;
  display: flex;
  align-items: center;
  justify-content: space-between;
  width: 74px;
  padding: 0 15px 1px 10px;
  border-radius: 10px 10px 0 0;
  background: #144a7c;
}
.active-tab::before,
.active-tab::after {
  content: "";
  position: absolute;
  bottom: 0;
  width: 10px;
  height: 10px;
}
.active-tab::before {
  right: 100%;
  background: radial-gradient(circle at 0 0, transparent 10px, #144a7c 10px);
}
.active-tab::after {
  left: 100%;
  background: radial-gradient(circle at 100% 0, transparent 10px, #144a7c 10px);
}
.new-tab { width: 54px; }
.window-controls {
  display: flex;
  height: 37px;
  margin-left: auto;
}
.window-controls .icon-btn { width: 57px; }

/* Toolbar */
.toolbar {
  display: flex;
  align-items: center;
  height: 53px;
  padding-right: 8px;
  border-bottom: 1px solid #3f6e9c;
  background: #144a7c;
}
.nav { display: flex; padding: 0 8px 0 7px; }
.nav .icon-btn { width: 40px; height: 40px; }
.omnibox {
  flex: 1;
  display: flex;
  align-items: center;
  height: 43px;
  padding: 0 11px 0 15px;
  border-radius: 22px;
  background: #1a3a5c;
  font-size: 17px;
}
.security { margin-left: 12px; color: #9aa6b4; }
.divider {
  width: 2px;
  height: 20px;
  margin: 0 11px 0 7px;
  background: #7c8a9b;
}
.url {
  flex: 1;
  min-width: 0;
  padding: 0;
  border: 0;
  outline: 0;
  font-family: inherit;
  font-size: 16px;
  color: transparent;
  background: linear-gradient(90deg, #fff 96px, #9aa6b4 96px);
  -webkit-background-clip: text;
  background-clip: text;
}
.share { margin-right: 19px; }
.extensions { display: flex; align-items: center; padding-left: 7px; }
.extensions .icon-btn { width: 40px; height: 40px; }
.avatar {
  width: 28px;
  height: 28px;
  margin: 0 5px 0 7px;
  border-radius: 50%;
  background: #0288d1;
  color: #fff;
  font-size: 14px;
}

/* Page */
.viewport { flex: 1; min-height: 0; display: flex; }
.page {
  flex: 1;
  overflow: hidden;
  padding: 25px;
}
.card {
  display: flex;
  flex-direction: column;
  align-items: center;
  max-width: 1140px;
  margin: 0 auto;
  padding: 25px;
  border-radius: 5px;
  background: #fff;
  box-shadow: 0 1px 1px rgba(0, 0, 0, .35), 0 1px 4px rgba(0, 0, 0, .15);
  font-family: "Liberation Sans", Arial, sans-serif;
}
h1 {
  margin: 0;
  font-family: "Open Sans", sans-serif;
  font-size: 38px;
  font-weight: 600;
  line-height: 49px;
  color: #5f9ea0;
}
.field {
  width: 100%;
  max-width: 348px;
  min-width: 0;
  margin: 0;
  padding: 0 10px;
  border: 1px solid #c0c0c0;
  border-radius: 5px;
}
.gap-s { margin-top: 16px; }
.gap-m { margin-top: 26px; }
.gap-l { margin-top: 36px; }
legend {
  padding: 0 6px;
  font-size: 15px;
  line-height: 18px;
  color: #757575;
}
label { display: block; }
.row { display: flex; }
.control {
  display: block;
  width: 100%;
  min-width: 0;
  height: 60px;
  margin: 0;
  padding: 0 6px 8px;
  border: 0;
  outline: 0;
  background: none;
  font-family: inherit;
  font-size: 20px;
  line-height: 24px;
  color: #212121;
}
textarea.control {
  height: 84px;
  padding: 13px 6px 0;
  resize: none;
  overflow: hidden;
}
.prefix {
  padding: 14px 4px 0 6px;
  font-size: 20px;
  line-height: 24px;
  color: #808080;
}
.calendar { height: 52px; margin-right: 22px; }
.next {
  width: 100%;
  max-width: 348px;
  height: 64px;
  margin-top: 25px;
  border: 2px solid #008000;
  border-radius: 5px;
  font-size: 18px;
  color: #008000;
}

.scrollbar {
  display: flex;
  flex-direction: column;
  width: 21px;
  background: #f1f1f1;
}
.track { flex: 1; padding: 0 2px; }
.thumb { height: 76%; background: #c1c1c1; }

/* Taskbar */
.taskbar {
  display: flex;
  align-items: center;
  height: 60px;
  border-top: 1px solid #b6b6b6;
  background: linear-gradient(90deg, #f8e7e0 0, #f6e6e0 22%, #e8e8ea 31%, #daeaf1 46%, #d7e9f2 100%);
}
.weather {
  position: relative;
  flex: none;
  width: 172px;
  height: 40px;
  padding: 0 0 8px 13px;
}
.temp {
  position: absolute;
  left: 23px;
  top: -2px;
  padding: 0 5px;
  border-radius: 10px;
  background: #f9f7f6;
  font-size: 13px;
  line-height: 20px;
  color: #111;
}
.apps {
  flex: 0 1 938px;
  min-width: 0;
  height: 59px;
  display: grid;
  grid-template-columns: 58fr repeat(16, 55fr);
}
.app {
  position: relative;
  display: flex;
  align-items: center;
  justify-content: center;
}
.app svg { position: relative; width: 30px; height: 30px; }
.running::after {
  content: "";
  position: absolute;
  bottom: 6px;
  width: 8px;
  height: 4px;
  border-radius: 2px;
  background: #858b8f;
}
.active::before {
  content: "";
  position: absolute;
  width: 48px;
  height: 48px;
  border-radius: 5px;
  background: #edf5fa;
}
.active::after { width: 20px; background: #268495; }
.badge {
  position: absolute;
  top: 8px;
  width: 20px;
  height: 20px;
  left: 50%;
  margin-left: 1px;
  border-radius: 50%;
  font-size: 14px;
  line-height: 20px;
  color: #fff;
}
.badge-count { background: #26808f; }
.badge-user { background: #0288d1; color: #b5dff5; font-size: 12px; }

.tray {
  display: flex;
  align-items: center;
  margin-left: auto;
  padding-right: 26px;
}
.tray > .icon-btn:first-child { width: 40px; }
.tray > .icon-btn:nth-child(2) { width: 40px; }
.status { display: flex; gap: 10px; padding: 0 20px 0 10px; }
.clock {
  display: flex;
  flex-direction: column;
  align-items: flex-end;
  margin-right: 10px;
  padding-bottom: 2px;
  font-size: 15px;
  line-height: 20px;
  color: #1a1a1a;
}
```
